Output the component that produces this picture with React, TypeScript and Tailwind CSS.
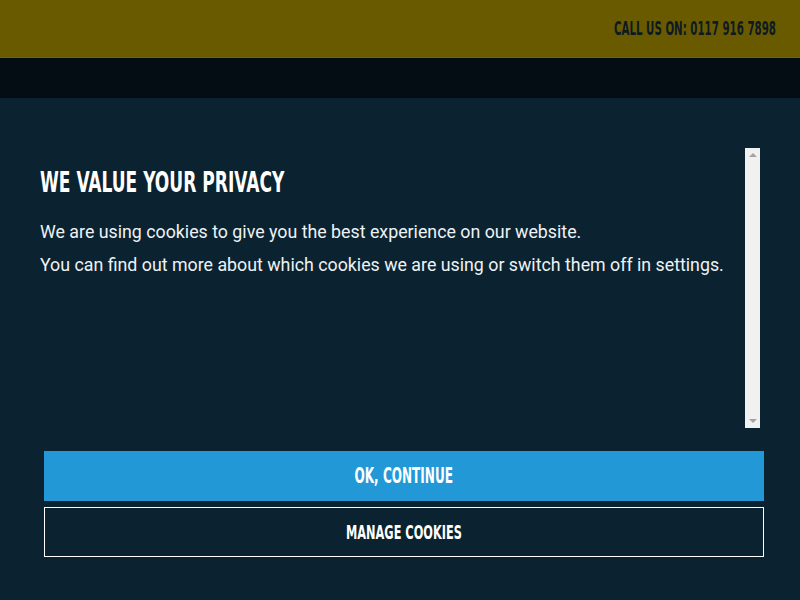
import React from "react";

const condensed = { fontFamily: '"DejaVu Sans Condensed", "DejaVu Sans", sans-serif' };

export default function App() {
  return (
    <div className="w-[800px] h-[600px] overflow-hidden bg-[#0b2230] flex flex-col" style={{ fontFamily: 'Roboto, "Liberation Sans", sans-serif' }}>
      <div className="h-[57px] bg-[#695a00] flex items-center justify-end pr-[24px] shrink-0">
        <span className="inline-block text-[19px] font-bold text-[#0d1a22] leading-none origin-right scale-x-[0.6] whitespace-nowrap" style={condensed}>CALL US ON: 0117 916 7898</span>
      </div>
      <div className="h-px bg-[#5b6066] shrink-0" />
      <div className="h-[40px] bg-[#050d14] shrink-0" />
      <div className="flex-1 flex flex-col pt-[50px]">
        <div className="flex h-[280px] ml-[40px] mr-[40px]">
          <div className="flex-1 pt-[20px]">
            <h1 className="inline-block text-[29px] font-bold text-white leading-none origin-left scale-x-[0.654] whitespace-nowrap" style={condensed}>WE VALUE YOUR PRIVACY</h1>
            <p className="mt-[16px] text-[17.8px] text-[#eef2f5] leading-[33px]">We are using cookies to give you the best experience on our website.</p>
            <p className="text-[17.8px] text-[#eef2f5] leading-[33px]">You can find out more about which cookies we are using or switch them off in settings.</p>
          </div>
          <div className="w-[15px] bg-[#f1f1f1] flex flex-col items-center justify-between py-[5px]">
            <svg width="8" height="4" viewBox="0 0 8 4"><polygon points="4,0 8,4 0,4" fill="#a3a3a3" /></svg>
            <svg width="8" height="4" viewBox="0 0 8 4"><polygon points="0,0 8,0 4,4" fill="#a3a3a3" /></svg>
          </div>
        </div>
        <div className="mt-[23px] ml-[44px] mr-[36px] flex flex-col gap-[6px]">
          <button className="h-[50px] bg-[#2398d6] text-white flex items-center justify-center">
            <span className="inline-block text-[22px] font-bold leading-none scale-x-[0.61] whitespace-nowrap" style={condensed}>OK, CONTINUE</span>
          </button>
          <button className="h-[50px] border border-white text-white flex items-center justify-center">
            <span className="inline-block text-[20px] font-bold leading-none scale-x-[0.63] whitespace-nowrap" style={condensed}>MANAGE COOKIES</span>
          </button>
        </div>
      </div>
    </div>
  );
}
